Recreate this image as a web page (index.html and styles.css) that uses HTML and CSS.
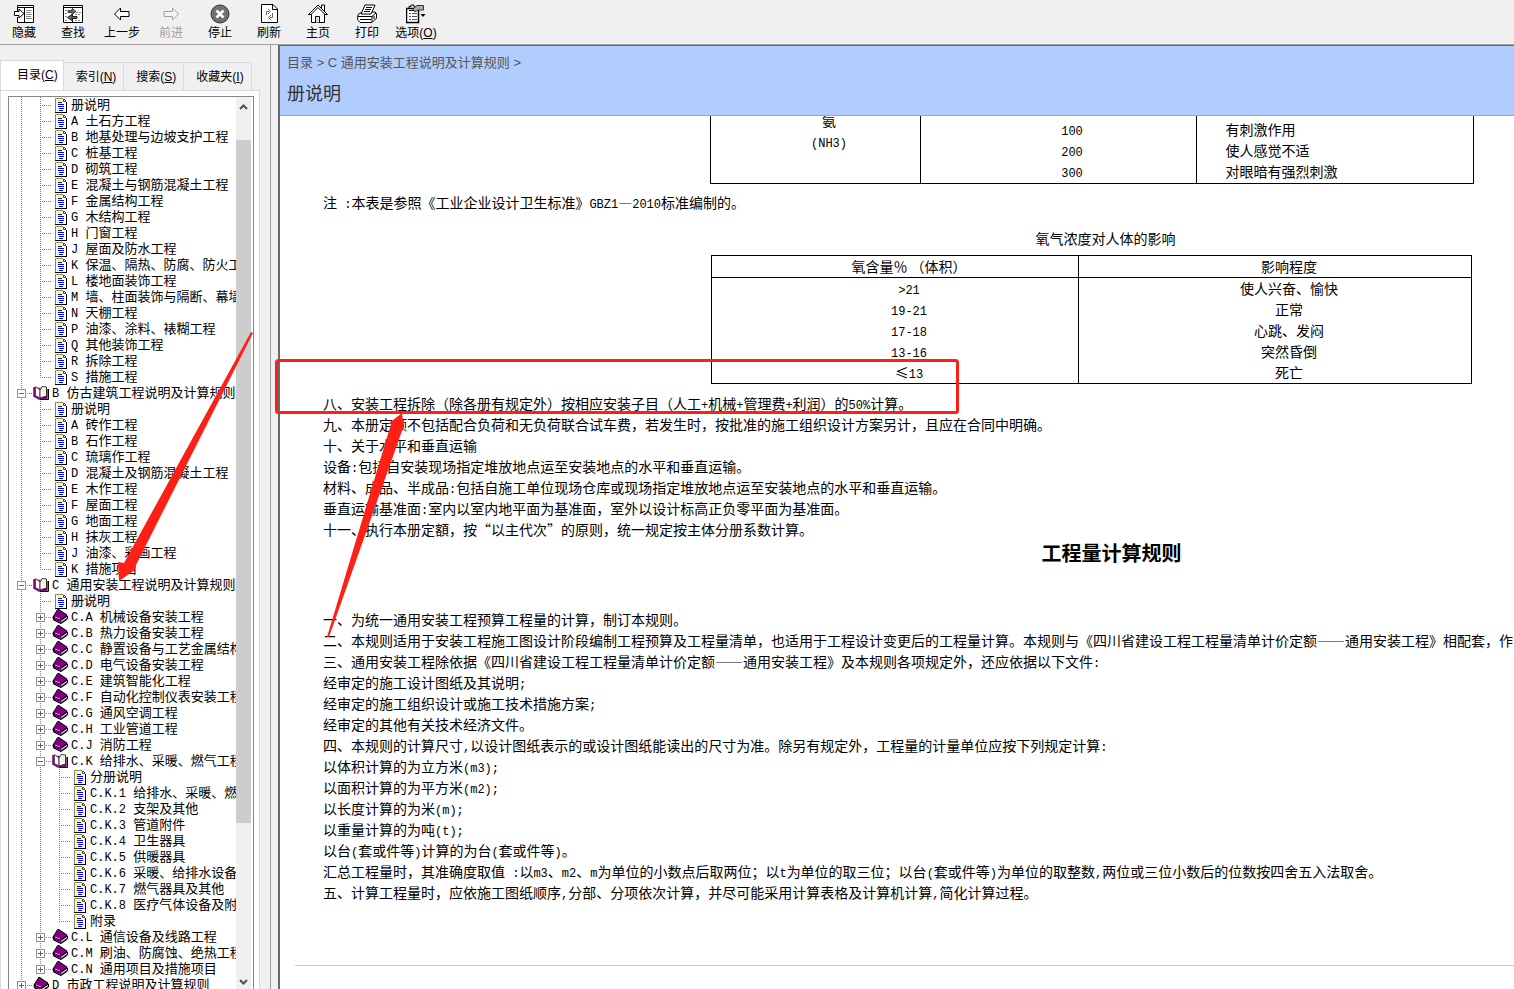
FILE: index.html
```html
<!DOCTYPE html>
<html lang="zh-CN">
<head>
<meta charset="utf-8">
<title>册说明</title>
<link rel="stylesheet" href="styles.css">
</head>
<body>
<svg class="defs" width="0" height="0" aria-hidden="true">
  <symbol id="doc" viewBox="0 0 12 15">
    <path d="M0 0H9L12 3V15H0Z" fill="#fff"/>
    <path d="M.5 14V.5H8" fill="none" stroke="#808080"/>
    <path d="M2 2.5H8M2.5 2V13" fill="none" stroke="#ff0" stroke-dasharray="2 1"/>
    <path d="M0 14.5H12M11.5 4V15" fill="none" stroke="#000"/>
    <path d="M8.5 1V3.5H11M9 1l2 2" fill="none" stroke="#404040"/>
    <path d="M3 4.5H7M3 6.5H9M3 8.5H9M4 10.5H9M4 12.5H8" stroke="#00f"/>
  </symbol>
  <symbol id="book" viewBox="0 0 16 15">
    <path d="M6 0L15 6L9 11L1 8Z" fill="#800080" stroke="#000"/>
    <path d="M1 8L9 11L15.500 7V10L9 14.500L1.500 11Z" fill="#800080" stroke="#000"/>
    <path d="M9 12.500L15 8.500" stroke="#fff"/>
    <path d="M3 8L8 10" stroke="#d8b0d8"/>
  </symbol>
  <symbol id="open" viewBox="0 0 16 15">
    <path d="M1 2V11L6 14L14 13V4" fill="#800080" stroke="#800080" stroke-width="1.500"/>
    <path d="M2.500 1.500L7 5V13L2.500 10.500Z" fill="#fff" stroke="#555"/>
    <path d="M7 5L9 1.500L13.500 2V11L7 13Z" fill="#fff" stroke="#333"/>
    <path d="M10 4V10M12 3.500V10" stroke="#e8e000" stroke-dasharray="1 1"/>
    <path d="M15.500 4V14.500H7" fill="none" stroke="#000"/>
  </symbol>
</svg>

<header class="toolbar">
  <button class="tool" type="button">
    <svg viewBox="0 0 20 20"><path d="M3.500 7V1.500H19.500V18.500H3.500V13" fill="#fff" stroke="#000"/><path d="M3 3.500H20M10.500 4V18" stroke="#000"/><path d="M12 6.500H18M12 8.500H17M12 10.500H18M12 12.500H17M12 14.500H18" stroke="#888"/><path d="M.5 7.500H5V5L10 9.500L5 14V11.500H.5Z" fill="#fff" stroke="#000"/></svg>
    隐藏</button>
  <button class="tool" type="button">
    <svg viewBox="0 0 20 20"><path d="M.5 1.500H19.500V18.500H.5Z" fill="#fff" stroke="#000"/><path d="M0 3.500H20M9.500 4V18" stroke="#000"/><path d="M2 6.500H7M2 9.500H5M2 12.500H4M12 10.500H18M13 8.500H18M12 16.500H18M2 16.500H4" stroke="#888" stroke-dasharray="2 1"/><path d="M5 6.500H9V4.500L13 7.500L9 10.500V8.500H5Z" fill="#666" stroke="#444"/><path d="M14 12.500H9V10.500L4.500 13.500L9 16.500V14.500H14Z" fill="#666" stroke="#222"/></svg>
    查找</button>
  <button class="tool" type="button">
    <svg viewBox="0 0 20 20"><path d="M2.500 10L8.500 4V7.500H17V12.500H8.500V16Z" fill="#fff" stroke="#000"/></svg>
    上一步</button>
  <button class="tool" type="button" disabled>
    <svg viewBox="0 0 20 20"><path d="M17.500 10L11.500 4V7.500H3V12.500H11.500V16Z" fill="#f4f4f4" stroke="#a0a0a0"/></svg>
    前进</button>
  <button class="tool" type="button">
    <svg viewBox="0 0 20 20"><circle cx="10" cy="10" r="9" fill="#707070" stroke="#333"/><path d="M6.500 6.500L13.500 13.500M13.500 6.500L6.500 13.500" stroke="#fff" stroke-width="2.500"/></svg>
    停止</button>
  <button class="tool" type="button">
    <svg viewBox="0 0 20 20"><path d="M2.500 .5H14L18.500 5V18.500H2.500Z" fill="#fff" stroke="#000"/><path d="M13.500 1V5.500H18" fill="none" stroke="#000"/><path d="M7.500 11V7.500H10M9 5L11.500 7.500L9 10M13.500 9V13.500H11M12 11L9.500 13.500L12 16" fill="none" stroke="#666"/></svg>
    刷新</button>
  <button class="tool" type="button">
    <svg viewBox="0 0 20 20"><path d="M13.500 5V1H16.500V8" fill="#fff" stroke="#000"/><path d="M3.500 9V18.500H16.500V9L10 2.500Z" fill="#fff" stroke="#000"/><path d="M.5 10.500L10 1L19.500 10.500H17L10 3.500L3 10.500Z" fill="#fff" stroke="#000"/><path d="M7.500 18.500V12.500H11.500V18.500" fill="#ddd" stroke="#000"/></svg>
    主页</button>
  <button class="tool" type="button">
    <svg viewBox="0 0 20 20"><path d="M1 10.500L5 8H18L19.500 9.500V14L15 18.500H3L.5 15.500Z" fill="#fff" stroke="#000"/><path d="M8 1H18L14 10H4Z" fill="#fff" stroke="#000"/><path d="M9 3.500H15M8 5.500H14M7 7.500H13" stroke="#000"/><path d="M1 12.500H15L19 9M3 15.500H14M15 12.500V18M17 12V15" fill="none" stroke="#000"/></svg>
    打印</button>
  <button class="tool" type="button">
    <svg viewBox="0 0 20 20"><path d="M.5 4.500H12.500V18.500H.5Z" fill="#fff" stroke="#000" stroke-width="1.500"/><path d="M3 4V2.500H5V1H8V3H10M3 6.500H9" fill="none" stroke="#000"/><path d="M3 9.500H5M6 9.500H11M3 12.500H5M6 12.500H11M3 15.500H5M6 15.500H11" stroke="#555"/><path d="M7 5L11 1.500H17.500V6H12L9 8Z" fill="#aaa" stroke="#333"/><path d="M14.500 10H19.500L17 13Z"/></svg>
    <span>选项(<u>O</u>)</span></button>
</header>

<div class="window">
  <aside class="side">
    <nav class="tabs">
      <button class="tab active" type="button">目录(<u>C</u>)</button>
      <button class="tab" type="button">索引(<u>N</u>)</button>
      <button class="tab" type="button">搜索(<u>S</u>)</button>
      <button class="tab" type="button">收藏夹(<u>I</u>)</button>
    </nav>
    <div class="panel">
      <div class="treebox">
        <ul class="tree">
          <li><ul>
            <li><a class="row" href="#"><i></i><svg class="d"><use href="#doc"/></svg><span>册说明</span></a></li>
            <li><a class="row" href="#"><i></i><svg class="d"><use href="#doc"/></svg><span><b>A </b>土石方工程</span></a></li>
            <li><a class="row" href="#"><i></i><svg class="d"><use href="#doc"/></svg><span><b>B </b>地基处理与边坡支护工程</span></a></li>
            <li><a class="row" href="#"><i></i><svg class="d"><use href="#doc"/></svg><span><b>C </b>桩基工程</span></a></li>
            <li><a class="row" href="#"><i></i><svg class="d"><use href="#doc"/></svg><span><b>D </b>砌筑工程</span></a></li>
            <li><a class="row" href="#"><i></i><svg class="d"><use href="#doc"/></svg><span><b>E </b>混凝土与钢筋混凝土工程</span></a></li>
            <li><a class="row" href="#"><i></i><svg class="d"><use href="#doc"/></svg><span><b>F </b>金属结构工程</span></a></li>
            <li><a class="row" href="#"><i></i><svg class="d"><use href="#doc"/></svg><span><b>G </b>木结构工程</span></a></li>
            <li><a class="row" href="#"><i></i><svg class="d"><use href="#doc"/></svg><span><b>H </b>门窗工程</span></a></li>
            <li><a class="row" href="#"><i></i><svg class="d"><use href="#doc"/></svg><span><b>J </b>屋面及防水工程</span></a></li>
            <li><a class="row" href="#"><i></i><svg class="d"><use href="#doc"/></svg><span><b>K </b>保温、隔热、防腐、防火工</span></a></li>
            <li><a class="row" href="#"><i></i><svg class="d"><use href="#doc"/></svg><span><b>L </b>楼地面装饰工程</span></a></li>
            <li><a class="row" href="#"><i></i><svg class="d"><use href="#doc"/></svg><span><b>M </b>墙、柱面装饰与隔断、幕墙</span></a></li>
            <li><a class="row" href="#"><i></i><svg class="d"><use href="#doc"/></svg><span><b>N </b>天棚工程</span></a></li>
            <li><a class="row" href="#"><i></i><svg class="d"><use href="#doc"/></svg><span><b>P </b>油漆、涂料、裱糊工程</span></a></li>
            <li><a class="row" href="#"><i></i><svg class="d"><use href="#doc"/></svg><span><b>Q </b>其他装饰工程</span></a></li>
            <li><a class="row" href="#"><i></i><svg class="d"><use href="#doc"/></svg><span><b>R </b>拆除工程</span></a></li>
            <li class="last"><a class="row" href="#"><i></i><svg class="d"><use href="#doc"/></svg><span><b>S </b>措施工程</span></a></li>
          </ul></li>
          <li>
            <div class="row"><button class="ex" type="button" aria-label="折叠"></button><svg><use href="#open"/></svg><span><b>B </b>仿古建筑工程说明及计算规则</span></div>
            <ul>
              <li><a class="row" href="#"><i></i><svg class="d"><use href="#doc"/></svg><span>册说明</span></a></li>
              <li><a class="row" href="#"><i></i><svg class="d"><use href="#doc"/></svg><span><b>A </b>砖作工程</span></a></li>
              <li><a class="row" href="#"><i></i><svg class="d"><use href="#doc"/></svg><span><b>B </b>石作工程</span></a></li>
              <li><a class="row" href="#"><i></i><svg class="d"><use href="#doc"/></svg><span><b>C </b>琉璃作工程</span></a></li>
              <li><a class="row" href="#"><i></i><svg class="d"><use href="#doc"/></svg><span><b>D </b>混凝土及钢筋混凝土工程</span></a></li>
              <li><a class="row" href="#"><i></i><svg class="d"><use href="#doc"/></svg><span><b>E </b>木作工程</span></a></li>
              <li><a class="row" href="#"><i></i><svg class="d"><use href="#doc"/></svg><span><b>F </b>屋面工程</span></a></li>
              <li><a class="row" href="#"><i></i><svg class="d"><use href="#doc"/></svg><span><b>G </b>地面工程</span></a></li>
              <li><a class="row" href="#"><i></i><svg class="d"><use href="#doc"/></svg><span><b>H </b>抹灰工程</span></a></li>
              <li><a class="row" href="#"><i></i><svg class="d"><use href="#doc"/></svg><span><b>J </b>油漆、彩画工程</span></a></li>
              <li class="last"><a class="row" href="#"><i></i><svg class="d"><use href="#doc"/></svg><span><b>K </b>措施项目</span></a></li>
            </ul>
          </li>
          <li>
            <div class="row"><button class="ex" type="button" aria-label="折叠"></button><svg><use href="#open"/></svg><span><b>C </b>通用安装工程说明及计算规则</span></div>
            <ul>
              <li><a class="row" href="#"><i></i><svg class="d"><use href="#doc"/></svg><span class="sel">册说明</span></a></li>
              <li><div class="row"><button class="ex plus" type="button" aria-label="展开"></button><svg><use href="#book"/></svg><span><b>C.A </b>机械设备安装工程</span></div></li>
              <li><div class="row"><button class="ex plus" type="button" aria-label="展开"></button><svg><use href="#book"/></svg><span><b>C.B </b>热力设备安装工程</span></div></li>
              <li><div class="row"><button class="ex plus" type="button" aria-label="展开"></button><svg><use href="#book"/></svg><span><b>C.C </b>静置设备与工艺金属结构</span></div></li>
              <li><div class="row"><button class="ex plus" type="button" aria-label="展开"></button><svg><use href="#book"/></svg><span><b>C.D </b>电气设备安装工程</span></div></li>
              <li><div class="row"><button class="ex plus" type="button" aria-label="展开"></button><svg><use href="#book"/></svg><span><b>C.E </b>建筑智能化工程</span></div></li>
              <li><div class="row"><button class="ex plus" type="button" aria-label="展开"></button><svg><use href="#book"/></svg><span><b>C.F </b>自动化控制仪表安装工程</span></div></li>
              <li><div class="row"><button class="ex plus" type="button" aria-label="展开"></button><svg><use href="#book"/></svg><span><b>C.G </b>通风空调工程</span></div></li>
              <li><div class="row"><button class="ex plus" type="button" aria-label="展开"></button><svg><use href="#book"/></svg><span><b>C.H </b>工业管道工程</span></div></li>
              <li><div class="row"><button class="ex plus" type="button" aria-label="展开"></button><svg><use href="#book"/></svg><span><b>C.J </b>消防工程</span></div></li>
              <li>
                <div class="row"><button class="ex" type="button" aria-label="折叠"></button><svg><use href="#open"/></svg><span><b>C.K </b>给排水、采暖、燃气工程</span></div>
                <ul>
                  <li><a class="row" href="#"><i></i><svg class="d"><use href="#doc"/></svg><span>分册说明</span></a></li>
                  <li><a class="row" href="#"><i></i><svg class="d"><use href="#doc"/></svg><span><b>C.K.1 </b>给排水、采暖、燃</span></a></li>
                  <li><a class="row" href="#"><i></i><svg class="d"><use href="#doc"/></svg><span><b>C.K.2 </b>支架及其他</span></a></li>
                  <li><a class="row" href="#"><i></i><svg class="d"><use href="#doc"/></svg><span><b>C.K.3 </b>管道附件</span></a></li>
                  <li><a class="row" href="#"><i></i><svg class="d"><use href="#doc"/></svg><span><b>C.K.4 </b>卫生器具</span></a></li>
                  <li><a class="row" href="#"><i></i><svg class="d"><use href="#doc"/></svg><span><b>C.K.5 </b>供暖器具</span></a></li>
                  <li><a class="row" href="#"><i></i><svg class="d"><use href="#doc"/></svg><span><b>C.K.6 </b>采暖、给排水设备</span></a></li>
                  <li><a class="row" href="#"><i></i><svg class="d"><use href="#doc"/></svg><span><b>C.K.7 </b>燃气器具及其他</span></a></li>
                  <li><a class="row" href="#"><i></i><svg class="d"><use href="#doc"/></svg><span><b>C.K.8 </b>医疗气体设备及附</span></a></li>
                  <li class="last"><a class="row" href="#"><i></i><svg class="d"><use href="#doc"/></svg><span>附录</span></a></li>
                </ul>
              </li>
              <li><div class="row"><button class="ex plus" type="button" aria-label="展开"></button><svg><use href="#book"/></svg><span><b>C.L </b>通信设备及线路工程</span></div></li>
              <li><div class="row"><button class="ex plus" type="button" aria-label="展开"></button><svg><use href="#book"/></svg><span><b>C.M </b>刷油、防腐蚀、绝热工程</span></div></li>
              <li class="last"><div class="row"><button class="ex plus" type="button" aria-label="展开"></button><svg><use href="#book"/></svg><span><b>C.N </b>通用项目及措施项目</span></div></li>
            </ul>
          </li>
          <li><div class="row"><button class="ex plus" type="button" aria-label="展开"></button><svg><use href="#book"/></svg><span><b>D </b>市政工程说明及计算规则</span></div></li>
        </ul>
        <div class="scroll">
          <svg viewBox="0 0 15 16"><path d="M4 12L7.500 8.500L11 12" fill="none" stroke="#505050" stroke-width="2"/></svg>
          <div class="track"><div class="thumb"></div></div>
          <svg viewBox="0 0 15 16"><path d="M4 7L7.500 10.500L11 7" fill="none" stroke="#505050" stroke-width="2"/></svg>
        </div>
      </div>
    </div>
  </aside>

  <main class="view">
    <header class="head">
      <p class="crumbs"><a href="#">目录</a> &gt; <a href="#">C 通用安装工程说明及计算规则</a> &gt;</p>
      <h1>册说明</h1>
    </header>
    <div class="page">
      <article class="sheet">
        <table class="gas">
          <colgroup><col class="g1"><col class="g2"><col class="g3"></colgroup>
          <tr>
            <td>氨<br><span class="n">(NH3)</span></td>
            <td><span class="n">100</span><br><span class="n">200</span><br><span class="n">300</span></td>
            <td>有刺激作用<br>使人感觉不适<br>对眼暗有强烈刺激</td>
          </tr>
        </table>
        <p class="note">注<span class="n"> :</span>本表是参照《工业企业设计卫生标准》<span class="n">GBZ1</span>—<span class="n">2010</span>标准编制的。</p>
        <table class="oxy">
          <caption>氧气浓度对人体的影响</caption>
          <colgroup><col class="o1"><col class="o2"></colgroup>
          <tr><th>氧含量％ （体积）</th><th>影响程度</th></tr>
          <tr><td><span class="n">&gt;21</span></td><td>使人兴奋、愉快</td></tr>
          <tr><td><span class="n">19-21</span></td><td>正常</td></tr>
          <tr><td><span class="n">17-18</span></td><td>心跳、发闷</td></tr>
          <tr><td><span class="n">13-16</span></td><td>突然昏倒</td></tr>
          <tr><td>≤<span class="n">13</span></td><td>死亡</td></tr>
        </table>
        <section>
          <p>八、安装工程拆除（除各册有规定外）按相应安装子目（人工<span class="n">+</span>机械<span class="n">+</span>管理费<span class="n">+</span>利润）的<span class="n">50%</span>计算。</p>
          <p>九、本册定额不包括配合负荷和无负荷联合试车费，若发生时，按批准的施工组织设计方案另计，且应在合同中明确。</p>
          <p>十、关于水平和垂直运输</p>
          <p>设备<span class="n">:</span>包括自安装现场指定堆放地点运至安装地点的水平和垂直运输。</p>
          <p>材料、成品、半成品<span class="n">:</span>包括自施工单位现场仓库或现场指定堆放地点运至安装地点的水平和垂直运输。</p>
          <p>垂直运输基准面<span class="n">:</span>室内以室内地平面为基准面，室外以设计标高正负零平面为基准面。</p>
          <p>十一、执行本册定額，按“以主代次”的原则，统一规定按主体分册系数计算。</p>
        </section>
        <h2>工程量计算规则</h2>
        <section>
          <p>一、为统一通用安装工程预算工程量的计算，制订本规则。</p>
          <p>二、本规则适用于安装工程施工图设计阶段编制工程预算及工程量清单，也适用于工程设计变更后的工程量计算。本规则与《四川省建设工程工程量清单计价定额——通用安装工程》相配套，作为</p>
          <p>三、通用安装工程除依据《四川省建设工程工程量清单计价定额——通用安装工程》及本规则各项规定外，还应依据以下文件<span class="n">:</span></p>
          <p>经审定的施工设计图纸及其说明<span class="n">;</span></p>
          <p>经审定的施工组织设计或施工技术措施方案<span class="n">;</span></p>
          <p>经审定的其他有关技术经济文件。</p>
          <p>四、本规则的计算尺寸<span class="n">,</span>以设计图纸表示的或设计图纸能读出的尺寸为准。除另有规定外，工程量的计量单位应按下列规定计算<span class="n">:</span></p>
          <p>以体积计算的为立方米<span class="n">(m3);</span></p>
          <p>以面积计算的为平方米<span class="n">(m2);</span></p>
          <p>以长度计算的为米<span class="n">(m);</span></p>
          <p>以重量计算的为吨<span class="n">(t);</span></p>
          <p>以台<span class="n">(</span>套或件等<span class="n">)</span>计算的为台<span class="n">(</span>套或件等<span class="n">)</span>。</p>
          <p>汇总工程量时，其准确度取值<span class="n"> :</span>以<span class="n">m3</span>、<span class="n">m2</span>、<span class="n">m</span>为单位的小数点后取两位；以<span class="n">t</span>为单位的取三位；以台<span class="n">(</span>套或件等<span class="n">)</span>为单位的取整数<span class="n">,</span>两位或三位小数后的位数按四舍五入法取舍。</p>
          <p>五、计算工程量时，应依施工图纸顺序<span class="n">,</span>分部、分项依次计算，并尽可能采用计算表格及计算机计算<span class="n">,</span>简化计算过程。</p>
        </section>
        <hr>
      </article>
    </div>
  </main>
</div>

<svg class="marks" width="1000" height="700" viewBox="0 0 1000 700" aria-hidden="true">
  <rect x="276.500" y="360.500" width="681" height="52" rx="2" fill="none" stroke="#ff2015" stroke-width="3"/>
  <path d="M251 332L253 333L136 565L135 570L119 581L118 562L124 563Z" fill="#ff2015"/>
  <path d="M327 637L329 637L403 428L404 428L402 413L388 424L391 424Z" fill="#ff2015"/>
</svg>
</body>
</html>
```

FILE: styles.css
```css
* { box-sizing: border-box; }

body {
  margin: 0;
  height: 100vh;
  display: flex;
  flex-direction: column;
  overflow: hidden;
  position: relative;
  background: #f0f0f0;
  color: #000;
  font: 12px/16px "Liberation Sans", "Noto Sans CJK SC", sans-serif;
  text-spacing-trim: space-all;
}

p, h1, h2, ul { margin: 0; padding: 0; }
ul { list-style: none; }
a { color: inherit; text-decoration: none; }
.defs { position: absolute; }

button {
  border: 0;
  padding: 0;
  background: none;
  color: inherit;
  font: inherit;
}

/* Toolbar */
.toolbar {
  flex: none;
  display: flex;
  height: 45px;
  border-bottom: 1px solid #a0a0a0;
}
.tool {
  width: 49px;
  padding: 4px 1px 0 0;
  display: flex;
  flex-direction: column;
  align-items: center;
  gap: 1px;
  white-space: nowrap;
}
.tool svg { width: 20px; height: 20px; flex: none; }
.tool:disabled { color: #a0a0a0; }

.window { flex: 1; min-height: 0; display: flex; }

/* Navigation pane */
.side {
  flex: none;
  width: 271px;
  padding: 15px 10px 0 0;
  border-right: 1px solid #a0a0a0;
  display: flex;
  flex-direction: column;
}
.tabs { display: flex; align-items: flex-end; height: 30px; }
.tab {
  height: 28px;
  padding: 0 7px 0 12px;
  border: 1px solid #d9d9d9;
  border-width: 1px 1px 0 0;
  white-space: nowrap;
}
.tab.active {
  height: 30px;
  padding: 0 5px 2px 16px;
  border-left-width: 1px;
  background: #fff;
}
.panel {
  flex: 1;
  min-height: 0;
  display: flex;
  padding: 5px 5px 0 7px;
  background: #fff;
  border: 1px solid #d9d9d9;
  border-bottom: 0;
}
.treebox {
  flex: 1;
  min-width: 0;
  display: flex;
  padding-right: 2px;
  border: 1px solid #828790;
  border-bottom: 0;
}
.tree {
  flex: 1;
  min-width: 0;
  overflow: hidden;
  font: 13px/16px "Noto Sans CJK SC", sans-serif;
}
.tree li {
  background: repeating-linear-gradient(#808080 0 1px, transparent 1px 2px) 12px 0 / 1px 100% no-repeat;
}
.tree li.last { background-size: 1px 8px; }
.tree ul { margin-left: 19px; }
.row {
  display: grid;
  grid-template-columns: 24px 19px 1fr;
  grid-template-rows: 16px;
  align-items: start;
  height: 16px;
  white-space: nowrap;
  background: repeating-linear-gradient(90deg, #808080 0 1px, transparent 1px 2px) 12px 8px / 12px 1px no-repeat;
}
.row svg { width: 16px; height: 15px; }
.row svg.d { width: 12px; margin: 1px 0 0 3px; }
.row span { justify-self: start; line-height: 14px; }
.row b { font: 12px/12px "Liberation Mono", monospace; white-space: pre; }
.row .sel { background: #f0f0f0; padding: 0 2px 2px 0; }
.ex {
  width: 9px;
  height: 9px;
  margin: 4px 0 0 8px;
  border: 1px solid #919191;
  background: linear-gradient(#4b63a7, #4b63a7) 1px 3px / 5px 1px no-repeat #fff;
}
.ex.plus {
  background:
    linear-gradient(#4b63a7, #4b63a7) 1px 3px / 5px 1px no-repeat,
    linear-gradient(#4b63a7, #4b63a7) 3px 1px / 1px 5px no-repeat #fff;
}

.scroll {
  flex: none;
  width: 15px;
  display: flex;
  flex-direction: column;
  background: #f0f0f0;
}
.scroll svg { flex: none; width: 15px; height: 16px; }
.track { flex: 1; padding-top: 27px; }
.thumb { height: 82%; background: #cdcdcd; }

/* Topic pane */
.view {
  flex: 1;
  min-width: 0;
  margin-left: 7px;
  display: flex;
  flex-direction: column;
  border-left: 2px solid #696969;
  border-top: 1px solid #696969;
  background: #fff;
}
.head {
  flex: none;
  height: 70px;
  padding: 7px;
  background: #b1cdfe;
  border-bottom: 1px solid #9aa6bd;
}
.crumbs { font-size: 13px; line-height: 20px; color: #555; }
h1 { margin-top: 8px; font-size: 18px; line-height: 26px; font-weight: 400; color: #333; }

.page { flex: 1; min-height: 0; overflow: hidden; padding-left: 15px; }
.sheet {
  min-width: 1593px;
  font: 14px/21px "Noto Sans CJK SC", sans-serif;
  white-space: nowrap;
}
.sheet p { text-indent: 28px; height: 21px; }
.n { font: 12px/12px "Liberation Mono", monospace; white-space: pre; }

table { border-collapse: collapse; table-layout: fixed; margin: 0 auto; }
td, th { padding: 0; font-weight: 400; text-align: center; vertical-align: top; }
.gas { width: 764px; margin-top: -6px; }
.gas td { border: 1px solid #000; border-top: 0; padding-top: 9px; padding-bottom: 1px; }
.gas td:first-child { padding: 0 0 0 28px; }
.gas td:nth-child(2) { padding-left: 28px; }
.gas td:last-child { padding-left: 29px; text-align: left; }
.g1 { width: 210px; }
.g2 { width: 276px; }
.note { margin-top: 8px; }
.oxy { width: 761px; margin-top: 15px; border: 1px solid #000; }
.oxy caption { padding-bottom: 6px; text-indent: 28px; }
.oxy td, .oxy th { border-left: 1px solid #000; text-indent: 28px; height: 21px; }
.oxy th { border-bottom: 1px solid #000; }
.o1 { width: 367px; }
section { margin-top: 9px; }
h2 {
  font-size: 20px;
  line-height: 25px;
  text-align: center;
  text-indent: 40px;
}
h2 + section { margin-top: 44px; }
hr { margin: 62px 0 0; border: 0; border-top: 1px solid #b1cdfe; }

.marks { position: absolute; left: 0; top: 0; pointer-events: none; }
```
